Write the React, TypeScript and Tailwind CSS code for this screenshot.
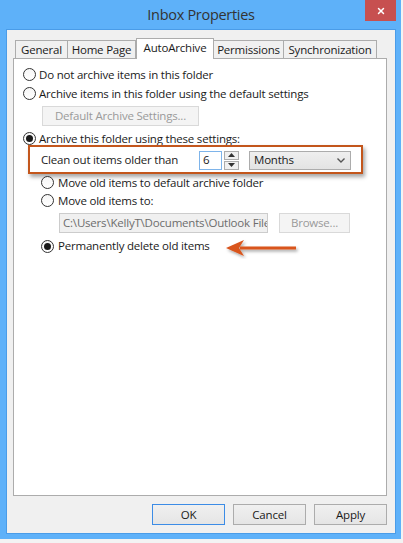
import { X } from 'lucide-react';

function Radio({ checked = false }: { checked?: boolean }) {
    return (
        <span className="w-[13px] h-[13px] rounded-full border border-[#333] bg-gradient-to-b from-[#f6f6f6] to-[#ffffff] flex items-center justify-center shrink-0">
            {checked && <span className="w-[7px] h-[7px] rounded-full bg-[#1a1a1a]" />}
        </span>
    );
}

function Tab({ label, width, active = false }: { label: string; width: string; active?: boolean }) {
    if (active) {
        return (
            <div className={`${width} h-[21px] -mb-px bg-white border border-b-0 border-[#acacac] flex items-center justify-center pb-[2px] z-10 relative whitespace-nowrap`}>
                {label}
            </div>
        );
    }
    return (
        <div className={`${width} h-[18px] -ml-px first:ml-0 bg-[#f0f0f0] border border-b-0 border-[#acacac] flex items-center justify-center whitespace-nowrap`}>
            {label}
        </div>
    );
}

export default function App() {
    return (
        <div className="w-[403px] h-[543px] bg-[#f3f3f3] font-['Open_Sans',sans-serif] text-[11.5px] tracking-[-0.2px] text-[#1a1a1a]">
            <div className="w-[401px] h-[539px] bg-[#5eb1f9] pl-[6px] pr-[5px] pb-[5px] flex flex-col">
                {/* title bar */}
                <div className="h-[29px] relative flex items-center justify-center">
                    <span className="text-[14.5px] tracking-[-0.3px] text-[#333] pt-[1px]">Inbox Properties</span>
                    <div className="absolute right-0 top-0 w-[31px] h-[21px] bg-[#c75050] flex items-center justify-center">
                        <X className="w-[10px] h-[10px] text-white" strokeWidth={3.5} />
                    </div>
                </div>

                <div className="flex-1 bg-[#f0f0f0] border border-[#4a9ce8] flex flex-col pl-[6px] pr-[8px]">
                    {/* tabs */}
                    <div className="flex items-end pt-[8px] pl-[2px]">
                        <Tab label="General" width="w-[53px]" />
                        <Tab label="Home Page" width="w-[69px]" />
                        <Tab label="AutoArchive" width="w-[78px]" active />
                        <Tab label="Permissions" width="w-[71px]" />
                        <Tab label="Synchronization" width="w-[94px]" />
                    </div>

                    {/* panel */}
                    <div className="h-[438px] bg-white border border-[#acacac] relative flex flex-col pt-[6px]">
                        <div className="h-[19px] flex items-center gap-[3px] pl-[9px]">
                            <Radio />
                            <span>Do not archive items in this folder</span>
                        </div>
                        <div className="h-[19px] flex items-center gap-[3px] pl-[9px]">
                            <Radio />
                            <span>Archive items in this folder using the default settings</span>
                        </div>
                        <div className="mt-[3px] ml-[28px] w-[157px] h-[20px] bg-[#f4f4f4] border border-[#d9d9d9] text-[#9a9a9a] flex items-center justify-center">
                            Default Archive Settings...
                        </div>
                        <div className="mt-[6px] h-[13px] flex items-center gap-[3px] pl-[9px]">
                            <Radio checked />
                            <span>Archive this folder using these settings:</span>
                        </div>

                        {/* highlighted row */}
                        <div className="ml-[14px] w-[335px] h-[29px] border-2 border-[#c3561c] bg-white shadow-[2px_3px_4px_rgba(0,0,0,0.35)] flex items-center pl-[11px] pt-[1px]">
                            <span className="w-[158px]">Clean out items older than</span>
                            <div className="w-[23px] h-[19px] border border-[#7eb4ea] bg-white flex items-center pl-[3px]">6</div>
                            <div className="ml-[2px] w-[15px] h-[19px] flex flex-col gap-[1px]">
                                <div className="flex-1 border border-[#acacac] bg-[#f0f0f0] flex items-center justify-center">
                                    <svg width="7" height="4" viewBox="0 0 7 4"><path d="M0 4 L3.5 0 L7 4 Z" fill="#333" /></svg>
                                </div>
                                <div className="flex-1 border border-[#acacac] bg-[#f0f0f0] flex items-center justify-center">
                                    <svg width="7" height="4" viewBox="0 0 7 4"><path d="M0 0 L3.5 4 L7 0 Z" fill="#333" /></svg>
                                </div>
                            </div>
                            <div className="ml-[10px] w-[102px] h-[19px] border border-[#acacac] bg-gradient-to-b from-[#efefef] to-[#e3e3e3] flex items-center justify-between pl-[4px] pr-[5px]">
                                <span>Months</span>
                                <svg width="8" height="5" viewBox="0 0 8 5"><path d="M0.5 0.5 L4 4 L7.5 0.5" fill="none" stroke="#555" strokeWidth="1.4" /></svg>
                            </div>
                        </div>

                        <div className="h-[17px] flex items-center gap-[4px] pl-[27px]">
                            <Radio />
                            <span>Move old items to default archive folder</span>
                        </div>
                        <div className="h-[19px] flex items-center gap-[4px] pl-[27px]">
                            <Radio />
                            <span>Move old items to:</span>
                        </div>
                        <div className="mt-[3px] h-[20px] flex pl-[45px]">
                            <div className="w-[209px] h-[20px] border border-[#cccccc] bg-[#f0f0f0] text-[#6d6d6d] flex items-center pl-[3px] overflow-hidden whitespace-nowrap">
                                <span className="truncate-none">C:\Users\KellyT\Documents\Outlook File</span>
                            </div>
                            <div className="ml-[11px] w-[71px] h-[20px] border border-[#d9d9d9] bg-[#f4f4f4] text-[#9a9a9a] flex items-center justify-center">
                                Browse...
                            </div>
                        </div>
                        <div className="mt-[4px] h-[18px] flex items-center gap-[4px] pl-[27px]">
                            <Radio checked />
                            <span>Permanently delete old items</span>
                        </div>

                        {/* annotation arrow */}
                        <svg className="absolute left-[210px] top-[178px]" width="76" height="22" viewBox="0 0 76 22">
                            <defs>
                                <filter id="sh" x="-20%" y="-50%" width="140%" height="200%">
                                    <feDropShadow dx="1.5" dy="2" stdDeviation="1.5" floodColor="#000" floodOpacity="0.35" />
                                </filter>
                            </defs>
                            <g filter="url(#sh)">
                                <path d="M16 9.5 L72 9.5 L72 12.5 L16 12.5 Z" fill="#d9541b" />
                                <path d="M2 11 L20 3 L15 11 L20 19 Z" fill="#d9541b" />
                            </g>
                        </svg>
                    </div>

                    {/* footer buttons */}
                    <div className="mt-[8px] flex justify-end gap-[8px]">
                        <div className="w-[73px] h-[21px] border border-[#3c8ce6] bg-gradient-to-b from-[#f0f0f0] to-[#e5e5e5] flex items-center justify-center">OK</div>
                        <div className="w-[73px] h-[21px] border border-[#acacac] bg-gradient-to-b from-[#f0f0f0] to-[#e5e5e5] flex items-center justify-center">Cancel</div>
                        <div className="w-[73px] h-[21px] border border-[#acacac] bg-gradient-to-b from-[#f0f0f0] to-[#e5e5e5] flex items-center justify-center">Apply</div>
                    </div>
                </div>
            </div>
        </div>
    );
}
